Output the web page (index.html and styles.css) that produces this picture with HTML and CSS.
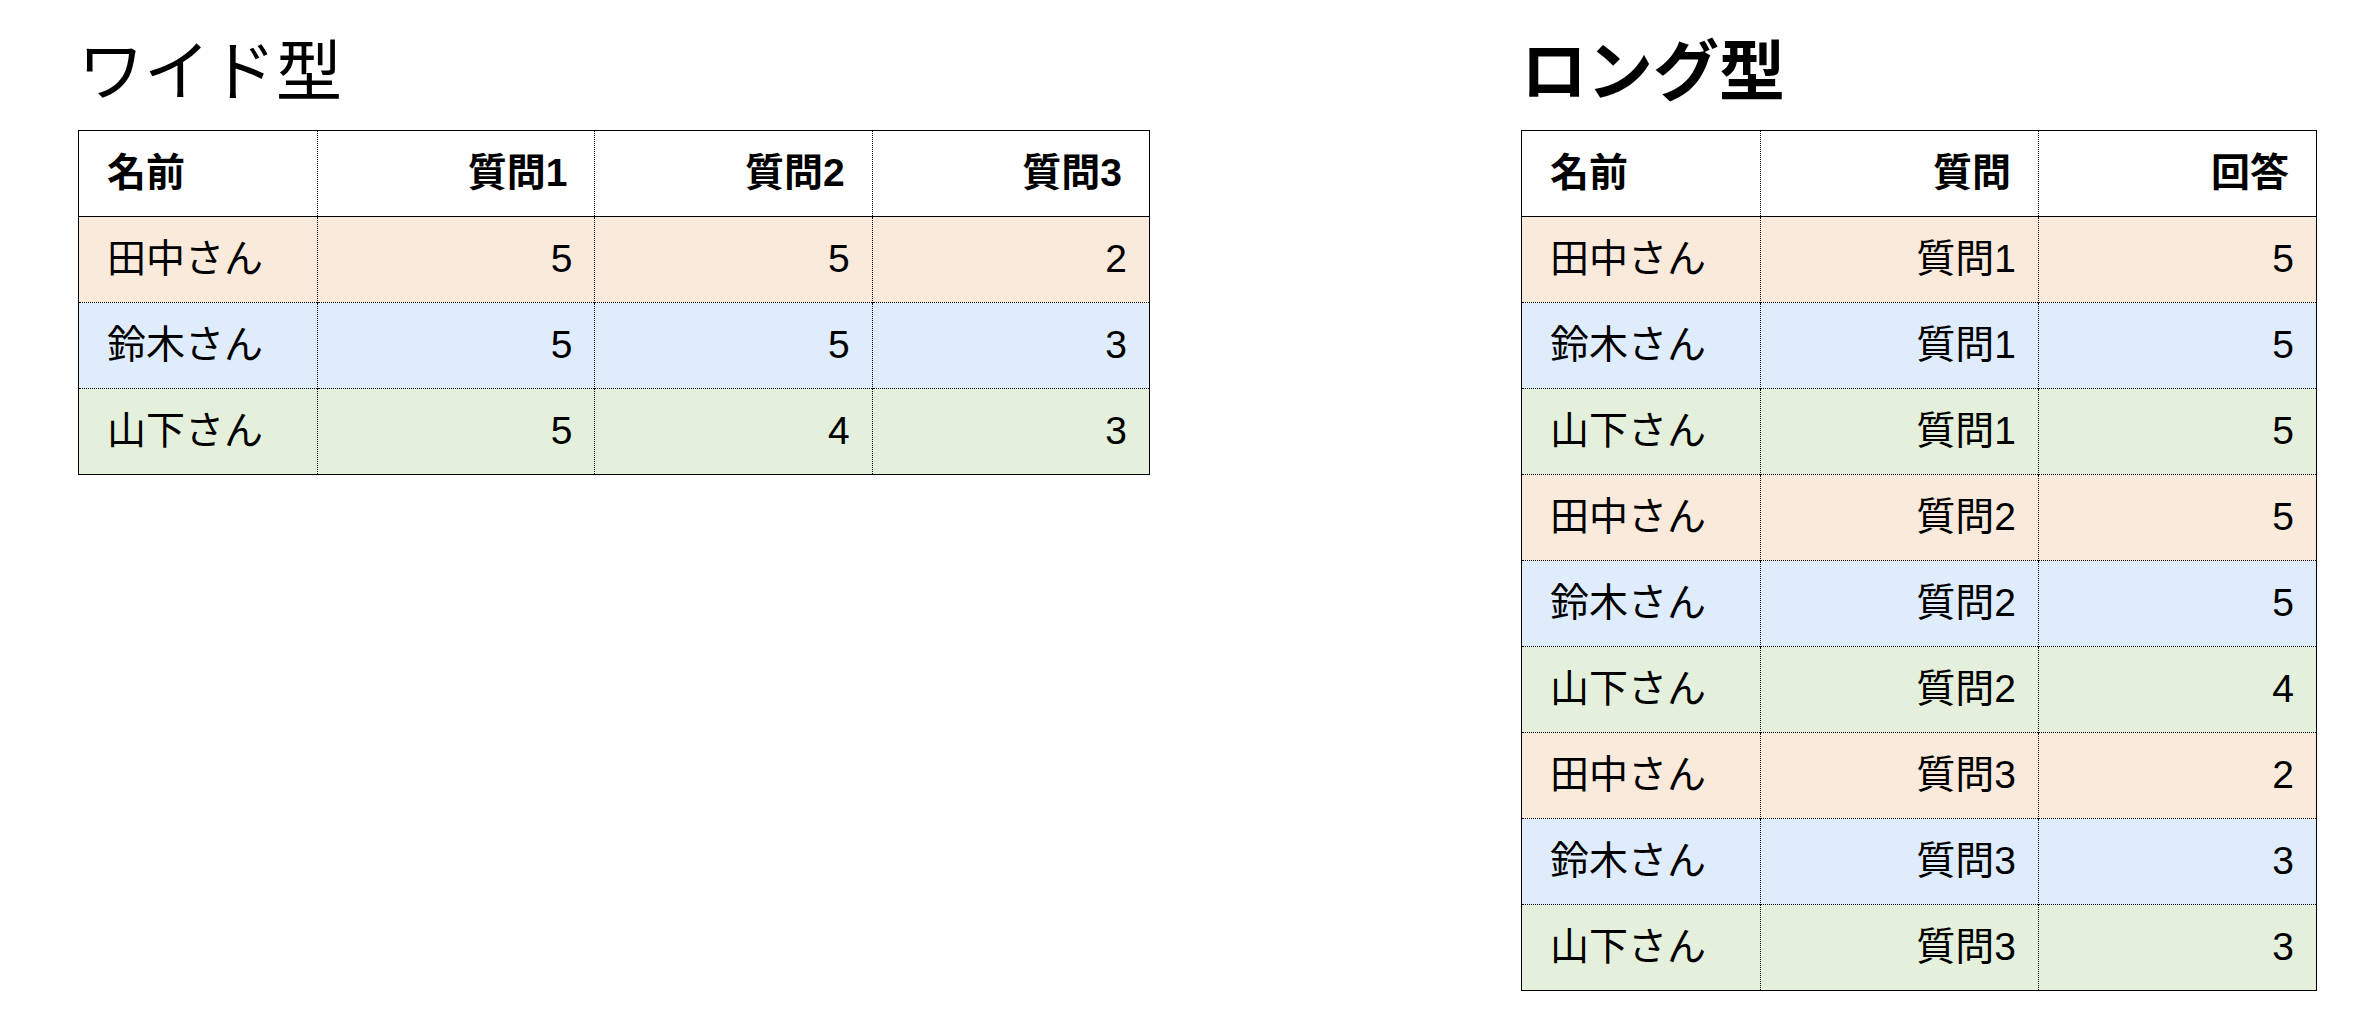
FILE: index.html
```html
<!DOCTYPE html>
<html lang="ja">
<head>
    <meta charset="UTF-8">
    <title>ワイド型とロング型</title>
    <link rel="stylesheet" href="styles.css">
</head>
<body>
    <main class="page">
        <section class="block wide">
            <h2 class="title light">ワイド型</h2>
            <table class="grid">
                <colgroup>
                    <col class="c-name">
                    <col class="c-val">
                    <col class="c-val">
                    <col class="c-val">
                </colgroup>
                <thead>
                    <tr>
                        <th class="left">名前</th>
                        <th>質問1</th>
                        <th>質問2</th>
                        <th>質問3</th>
                    </tr>
                </thead>
                <tbody>
                    <tr class="peach"><td class="left">田中さん</td><td>5</td><td>5</td><td>2</td></tr>
                    <tr class="blue"><td class="left">鈴木さん</td><td>5</td><td>5</td><td>3</td></tr>
                    <tr class="green"><td class="left">山下さん</td><td>5</td><td>4</td><td>3</td></tr>
                </tbody>
            </table>
        </section>

        <section class="block long">
            <h2 class="title">ロング型</h2>
            <table class="grid">
                <colgroup>
                    <col class="c-name">
                    <col class="c-val">
                    <col class="c-val">
                </colgroup>
                <thead>
                    <tr>
                        <th class="left">名前</th>
                        <th>質問</th>
                        <th>回答</th>
                    </tr>
                </thead>
                <tbody>
                    <tr class="peach"><td class="left">田中さん</td><td>質問1</td><td>5</td></tr>
                    <tr class="blue"><td class="left">鈴木さん</td><td>質問1</td><td>5</td></tr>
                    <tr class="green"><td class="left">山下さん</td><td>質問1</td><td>5</td></tr>
                    <tr class="peach"><td class="left">田中さん</td><td>質問2</td><td>5</td></tr>
                    <tr class="blue"><td class="left">鈴木さん</td><td>質問2</td><td>5</td></tr>
                    <tr class="green"><td class="left">山下さん</td><td>質問2</td><td>4</td></tr>
                    <tr class="peach"><td class="left">田中さん</td><td>質問3</td><td>2</td></tr>
                    <tr class="blue"><td class="left">鈴木さん</td><td>質問3</td><td>3</td></tr>
                    <tr class="green"><td class="left">山下さん</td><td>質問3</td><td>3</td></tr>
                </tbody>
            </table>
        </section>
    </main>
</body>
</html>
```

FILE: styles.css
```css
* {
    margin: 0;
    padding: 0;
    box-sizing: border-box;
}

body {
    font-family: "Liberation Sans", "Noto Sans CJK JP", sans-serif;
    color: #000;
    background: #fff;
}

.page {
    display: flex;
    align-items: flex-start;
    gap: 371px;
    padding: 33px 0 0 78px;
}

.wide {
    width: 1072px;
}

.long {
    width: 795px;
}

.title {
    font-family: "Noto Sans CJK JP", sans-serif;
    font-size: 66px;
    line-height: 66px;
    font-weight: 700;
    margin-bottom: 31px;
}

.title.light {
    font-weight: 400;
}

.grid {
    width: 100%;
    border-collapse: collapse;
    table-layout: fixed;
    border: 1px solid #000;
    font-size: 39px;
}

.wide .c-name,
.long .c-name {
    width: 239px;
}

.long .c-val {
    width: 278px;
}

.grid tr {
    height: 86px;
}

.grid th,
.grid td {
    text-align: right;
    vertical-align: middle;
    padding: 0 22px 0 28px;
    border-left: 1px dotted #000;
    border-top: 1px dotted #000;
    line-height: 1.2;
    white-space: nowrap;
}

.grid th {
    font-weight: 700;
    padding-right: 27px;
    border-top: none;
    border-bottom: 1px solid #000;
}

.grid th:first-child,
.grid td:first-child {
    border-left: none;
}

.grid .left {
    text-align: left;
}

.grid tbody tr:first-child td {
    border-top: none;
}

.peach {
    background: #f9eadc;
}

.blue {
    background: #dfecfb;
}

.green {
    background: #e4f0db;
}
```
